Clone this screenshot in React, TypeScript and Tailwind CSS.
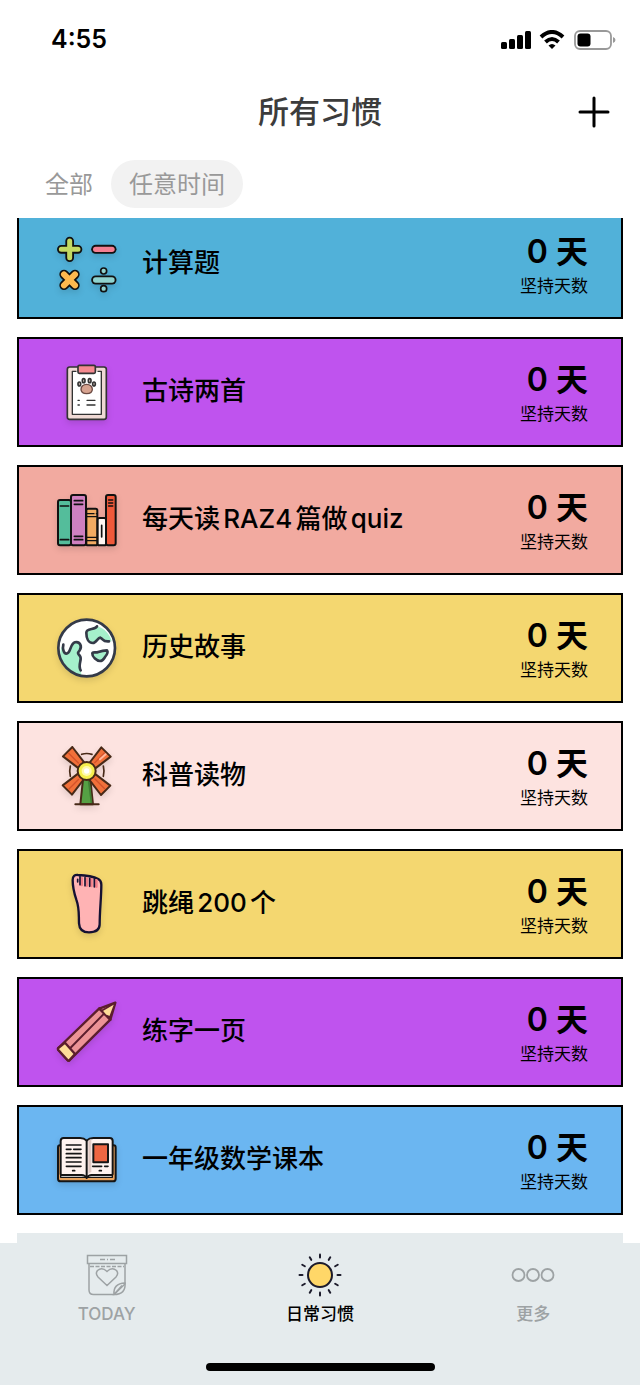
import { clsx } from "clsx";
import { useState } from "react";

import type { ReactNode } from "react";

type Habit = {
  name: string;
  days: number;
  color: string;
  icon: ReactNode;
};

const Glyph = ({ viewBox, children }: { viewBox: string; children: ReactNode }) => (
  <svg
    xmlns="http://www.w3.org/2000/svg"
    viewBox={viewBox}
    className="size-15 shrink-0 overflow-visible drop-shadow-md"
    fill="none"
    strokeLinecap="round"
    strokeLinejoin="round"
    aria-hidden="true">
    {children}
  </svg>
);

const MathIcon = () => (
  <Glyph viewBox="51 57 180 180">
    <path d="M89 78v50M64 103h50" stroke="#111" strokeWidth="26" />
    <path d="M89 78v50M64 103h50" stroke="#c3da62" strokeWidth="15" />
    <path d="M167 103h49" stroke="#111" strokeWidth="27" />
    <path d="M167 103h49" stroke="#f37f92" strokeWidth="16" />
    <path d="M72 178l33 33M105 178l-33 33" stroke="#111" strokeWidth="28" />
    <path d="M72 178l33 33M105 178l-33 33" stroke="#fdb94e" strokeWidth="18" />
    <path d="M167 195h49" stroke="#111" strokeWidth="27" />
    <path d="M167 195h49" stroke="#8fd3cf" strokeWidth="16" />
    <circle cx="191" cy="168" r="9" fill="#8fd3cf" stroke="#111" strokeWidth="5" />
    <circle cx="191" cy="221" r="9" fill="#8fd3cf" stroke="#111" strokeWidth="5" />
  </Glyph>
);

const ClipboardIcon = () => (
  <Glyph viewBox="51 51 180 180">
    <g stroke="#333" strokeWidth="5">
      <rect x="82" y="66" width="117" height="157" rx="7" fill="#efd9d4" />
      <path d="M97 79h87v129H97z" fill="#fff" stroke="none" />
      <path d="M108 79H97v129h87V79h-10" strokeWidth="4" />
      <rect x="114" y="61" width="52" height="24" rx="4" fill="#f58a90" />
      <g fill="#d9c3bb">
        <ellipse cx="118" cy="117" rx="4" ry="6" />
        <ellipse cx="131" cy="107" rx="4" ry="6" />
        <ellipse cx="149" cy="107" rx="4" ry="6" />
        <ellipse cx="162" cy="117" rx="4" ry="6" />
      </g>
      <path
        d="M140 118c10 0 17 7 17 15 0 9-7 13-17 13s-17-4-17-13c0-8 7-15 17-15z"
        fill="#d7a390"
        stroke="#6b4a43"
        strokeWidth="4"
      />
      <path d="M114 166h4M114 180h4M141 166h24M141 180h24" strokeWidth="4" />
    </g>
  </Glyph>
);

const BooksIcon = () => (
  <Glyph viewBox="51 45 180 180">
    <g stroke="#111" strokeWidth="6">
      <rect x="54" y="75" width="39" height="136" rx="6" fill="#54bd9b" />
      <rect x="93" y="60" width="45" height="151" rx="6" fill="#cf80c0" />
      <rect x="139" y="101" width="33" height="110" rx="5" fill="#f2ab62" />
      <rect x="173" y="129" width="25" height="82" rx="5" fill="#fff6f2" />
      <rect x="198" y="60" width="29" height="151" rx="6" fill="#f0593a" />
      <path d="M61 93h25M61 194h25M103 77h25M103 88h25M103 184h25M103 194h25" strokeWidth="5" />
      <path d="M141 116h21M169 116h1M141 125h29M141 187h29M141 197h29" strokeWidth="4" />
      <path d="M185 151v35M206 75h12M206 84h12M206 93h12" strokeWidth="5" />
    </g>
  </Glyph>
);

const EarthIcon = () => (
  <Glyph viewBox="51 54 180 180">
    <circle cx="140" cy="144" r="85" fill="#fff" />
    <path d="M68 134c-5 12 3 27 11 27 14 0 10-29 26-34 15-4 22 13 14 24-8 9-5 10 1 17 8 10-8 26 2 43l3 17c-45-2-80-48-57-94z" fill="#a5f0cb" />
    <path d="M171 79c-5 12-32 4-32 19 0 14 5 27 20 31 9 1 15-17 22-16 9 3 6 13 34 11-6-22-20-38-44-45z" fill="#a5f0cb" />
    <g stroke="#343a48" strokeWidth="8">
      <path d="M70 134c-3 12 1 27 9 27 14 0 10-29 26-34 15-4 22 13 14 24-8 9-5 10 1 17 8 10-8 26 2 43" />
      <path d="M171 79c-5 12-32 4-32 19 0 14 5 31 20 31 9 0 15-17 22-16 9 3 6 13 26 11" />
      <path d="M157 160c0-5 11-1 18-4 8-3 15-5 26-5 4 5-1 14-6 20-4 6-6 12-15 12s-24-12-23-23z" fill="#a5f0cb" />
      <circle cx="140" cy="144" r="85" />
    </g>
  </Glyph>
);

const WindmillIcon = () => (
  <Glyph viewBox="51 48 180 180">
    <g stroke="#472917" strokeWidth="6">
      <path d="M125 73q15-5 31 0M91 108q-4 16 0 31M190 108q4 16 0 31" strokeWidth="5" />
      <path d="M129 148l-8 75h38l-8-75z" fill="#55a044" />
      <path d="M143 151l9 69h5l-8-73z" fill="#3f7f34" stroke="none" />
      <path d="M106 223h70" />
      {[0, 90, 180, 270].map((angle) => (
        <g key={angle} transform={`rotate(${angle} 140 123)`}>
          <path d="M148 99l36-47 28 28-47 36z" fill="#f0703a" />
          <path d="M164 98l29-29" stroke="#d4522a" strokeWidth="4" />
        </g>
      ))}
      <path d="M180 88l17-15" stroke="#ffb79b" strokeWidth="6" />
      <circle cx="140" cy="123" r="27" fill="#f6ef4e" />
    </g>
    <circle cx="140" cy="123" r="15" fill="#fff9ad" />
    <circle cx="140" cy="123" r="8" fill="#fff" />
  </Glyph>
);

const FootIcon = () => (
  <Glyph viewBox="51 42 180 180">
    <path
      d="M98 60c0-12 6-16 16-15 23 1 47 5 61 12 7 4 9 9 9 17 0 37-5 78-5 119 0 17-14 24-32 24s-29-8-30-27c-1-35 1-46-8-71-7-21-11-38-11-59z"
      fill="#ffb3b4"
      stroke="#151132"
      strokeWidth="7"
    />
    <path d="M125 55v20M140 56v21M154 58v20M169 61v19" stroke="#f27d86" strokeWidth="8" />
    <path d="M120 50v24M135 53v24M149 55v24M163 57v24M113 58v8" stroke="#151132" strokeWidth="5" />
  </Glyph>
);

const PencilIcon = () => (
  <Glyph viewBox="51 51 180 180">
    <g stroke="#5c1e2d" strokeWidth="7">
      <path d="M55 189L178 70l33 34L88 226q-2 2-5 0L55 195q-2-3 0-6z" fill="#ec9396" />
      <path d="M75 173l30 34-17 19q-2 2-5 0L55 195q-2-3 0-6z" fill="#fddc98" />
      <path d="M178 71l48-18-15 51-13-14z" fill="#ec9396" />
      <path d="M185 77l41-24-16 43-13-5z" fill="#fddc98" strokeWidth="5" />
      <path d="M91 189l99-101" strokeWidth="6" />
    </g>
  </Glyph>
);

const OpenBookIcon = () => (
  <Glyph viewBox="51 45 180 180">
    <g stroke="#151515" strokeWidth="6">
      <path d="M60 91q-6 0-6 7v93q0 8 8 8h157q8 0 8-8V98q0-7-6-7z" fill="#e9a35e" />
      <path d="M62 180v7h155v-7" fill="#fff" strokeWidth="4" />
      <path
        d="M140 77q-8-8-20-8H71q-9 0-9 9v98q0 4 5 4h58q10 0 15 9 5-9 15-9h58q5 0 5-4V78q0-9-9-9h-49q-12 0-20 8z"
        fill="#fff3ef"
      />
      <path d="M145 78v99q4-4 9-6V73q-6 1-9 5z" fill="#e1cac4" stroke="none" />
      <path d="M140 77v109" />
      <path d="M160 88h44v54h-44z" fill="#ee6642" />
      <path
        d="M79 90h44M79 103h14M101 103h22M79 116h44M79 128h44M79 141h44M79 154h44M98 167h6M158 154h27M194 154h10M178 167h6"
        strokeWidth="5"
      />
    </g>
  </Glyph>
);

const TodayIcon = () => (
  <svg viewBox="-1 -1 44 44" className="size-11" fill="none" stroke="currentColor" strokeWidth="1.5" aria-hidden="true">
    <path d="M1.500 1.500h39v8h-39zM3 9.500V36q0 4.500 4.500 4.500H28L39 30V9.500" />
    <path d="M4 12.500h34" strokeDasharray="4 1.500" />
    <path d="M14 5.500h5M21 5.500h1M24 5.500h5" />
    <path d="M21 31.500L12 23q-3-3.500-.500-6.500 4.500-4 9.500 1 5-5 9.500-1 2.500 3-.500 6.500z" />
    <path d="M28 40.500q-1-11 11-11.500 1 11.500-11 11.500l8-9" />
  </svg>
);

const SunIcon = () => (
  <svg viewBox="-22 -22 44 44" className="size-11" fill="none" strokeLinecap="round" aria-hidden="true">
    <circle r="12" fill="#ffd768" stroke="#1c1b2b" strokeWidth="2" />
    {Array.from({ length: 12 }, (_, i) => (
      <path key={i} d="M0-17.500v-3" stroke="#1c1b2b" strokeWidth="2" transform={`rotate(${i * 30})`} />
    ))}
  </svg>
);

const MoreIcon = () => (
  <svg viewBox="-22 -22 44 44" className="size-11" fill="none" stroke="currentColor" strokeWidth="1.8" aria-hidden="true">
    <circle cx="-14.500" r="6" />
    <circle r="6" />
    <circle cx="14.500" r="6" />
  </svg>
);

const habits: Habit[] = [
  { name: "计算题", days: 0, color: "bg-[#51b1d9]", icon: <MathIcon /> },
  { name: "古诗两首", days: 0, color: "bg-[#bf53ee]", icon: <ClipboardIcon /> },
  { name: "每天读RAZ4篇做quiz", days: 0, color: "bg-[#f2aaa0]", icon: <BooksIcon /> },
  { name: "历史故事", days: 0, color: "bg-[#f4d770]", icon: <EarthIcon /> },
  { name: "科普读物", days: 0, color: "bg-[#fde3e0]", icon: <WindmillIcon /> },
  { name: "跳绳200个", days: 0, color: "bg-[#f4d770]", icon: <FootIcon /> },
  { name: "练字一页", days: 0, color: "bg-[#bf53ee]", icon: <PencilIcon /> },
  { name: "一年级数学课本", days: 0, color: "bg-[#6bb6f1]", icon: <OpenBookIcon /> },
];

const filters = ["全部", "任意时间"];

const tabs = [
  { label: "TODAY", icon: <TodayIcon /> },
  { label: "日常习惯", icon: <SunIcon /> },
  { label: "更多", icon: <MoreIcon /> },
];

const StatusBar = () => (
  <div className="flex h-20 items-center justify-between pr-6 pl-[51px]">
    <time className="text-[25px] font-semibold">4:55</time>
    <svg viewBox="0 0 116 20" className="h-5 w-29" aria-hidden="true">
      <rect x="1" y="12" width="6" height="7" rx="1.500" />
      <rect x="9" y="9" width="6" height="10" rx="1.500" />
      <rect x="17" y="5" width="6" height="14" rx="1.500" />
      <rect x="25" y="1" width="6" height="18" rx="1.500" />
      <g fill="none" stroke="#000" strokeWidth="4">
        <path d="M41 7q11-10 22 0" />
        <path d="M45.500 12q6.500-6 13 0" />
      </g>
      <path d="M48.500 15.500q3.500-3 7 0L52 19z" />
      <rect x="75" y="1" width="36" height="18" rx="5" fill="none" stroke="#999" strokeWidth="1.800" />
      <rect x="77.500" y="3.500" width="13" height="13" rx="3" />
      <path d="M113 7q2.500 1 2.500 3t-2.500 3z" fill="#999" />
    </svg>
  </div>
);

const HabitCard = ({ name, days, color, icon }: Habit) => (
  <li className={clsx("flex h-[110px] shrink-0 items-center border-2 border-black pr-[33px] pl-[38px]", color)}>
    {icon}
    <h2 className="ml-[25px] flex-1 pb-1 text-[26px] font-medium [text-autospace:normal]">{name}</h2>
    <div className="pt-1 text-right">
      <p className="text-[32px] leading-10 font-semibold">{days} 天</p>
      <p className="text-[17px] leading-7">坚持天数</p>
    </div>
  </li>
);

export default function App() {
  const [filter, setFilter] = useState("任意时间");
  const [tab, setTab] = useState("日常习惯");

  return (
    <div className="flex h-screen flex-col bg-white font-['Inter','Noto_Sans_CJK_SC',sans-serif] text-black">
      <StatusBar />
      <header className="grid h-16 grid-cols-[1fr_auto_1fr] items-center px-7">
        <h1 className="col-start-2 text-[31px] font-medium text-[#3c3c3c]">所有习惯</h1>
        <button type="button" aria-label="添加" className="justify-self-end">
          <svg viewBox="0 0 36 36" className="size-9" stroke="#000" strokeWidth="3" strokeLinecap="round">
            <path d="M18 4v28M4 18h28" />
          </svg>
        </button>
      </header>
      <div className="flex px-[27px] py-4">
        {filters.map((v) => (
          <button
            key={v}
            type="button"
            aria-pressed={v === filter}
            className={clsx(
              "h-12 rounded-full px-[18px] pt-0.5 text-2xl text-[#999]",
              v === filter && "bg-[#f2f2f2]"
            )}
            onClick={() => setFilter(v)}>
            {v}
          </button>
        ))}
      </div>
      <main className="-mt-1.5 min-h-0 flex-1 overflow-y-auto px-[17px] [scrollbar-width:none]">
        <ul className="-mt-[9px] flex flex-col gap-[18px]">
          {habits.map((habit) => (
            <HabitCard key={habit.name} {...habit} />
          ))}
          <li className="h-[110px] shrink-0 bg-[#e5ebed]" />
        </ul>
      </main>
      <footer className="bg-[#e5ebed]">
        <nav className="grid grid-cols-3 pt-2.5">
          {tabs.map(({ label, icon }) => (
            <button
              key={label}
              type="button"
              aria-current={label === tab ? "page" : undefined}
              className={clsx(
                "flex flex-col items-center gap-[3px] text-[17px] leading-7 font-medium",
                label === tab ? "text-black" : "text-[#9da2a4]"
              )}
              onClick={() => setTab(label)}>
              {icon}
              {label}
            </button>
          ))}
        </nav>
        <div className="mx-auto mt-[35px] mb-3.5 h-2 w-[229px] rounded-full bg-black" />
      </footer>
    </div>
  );
}
